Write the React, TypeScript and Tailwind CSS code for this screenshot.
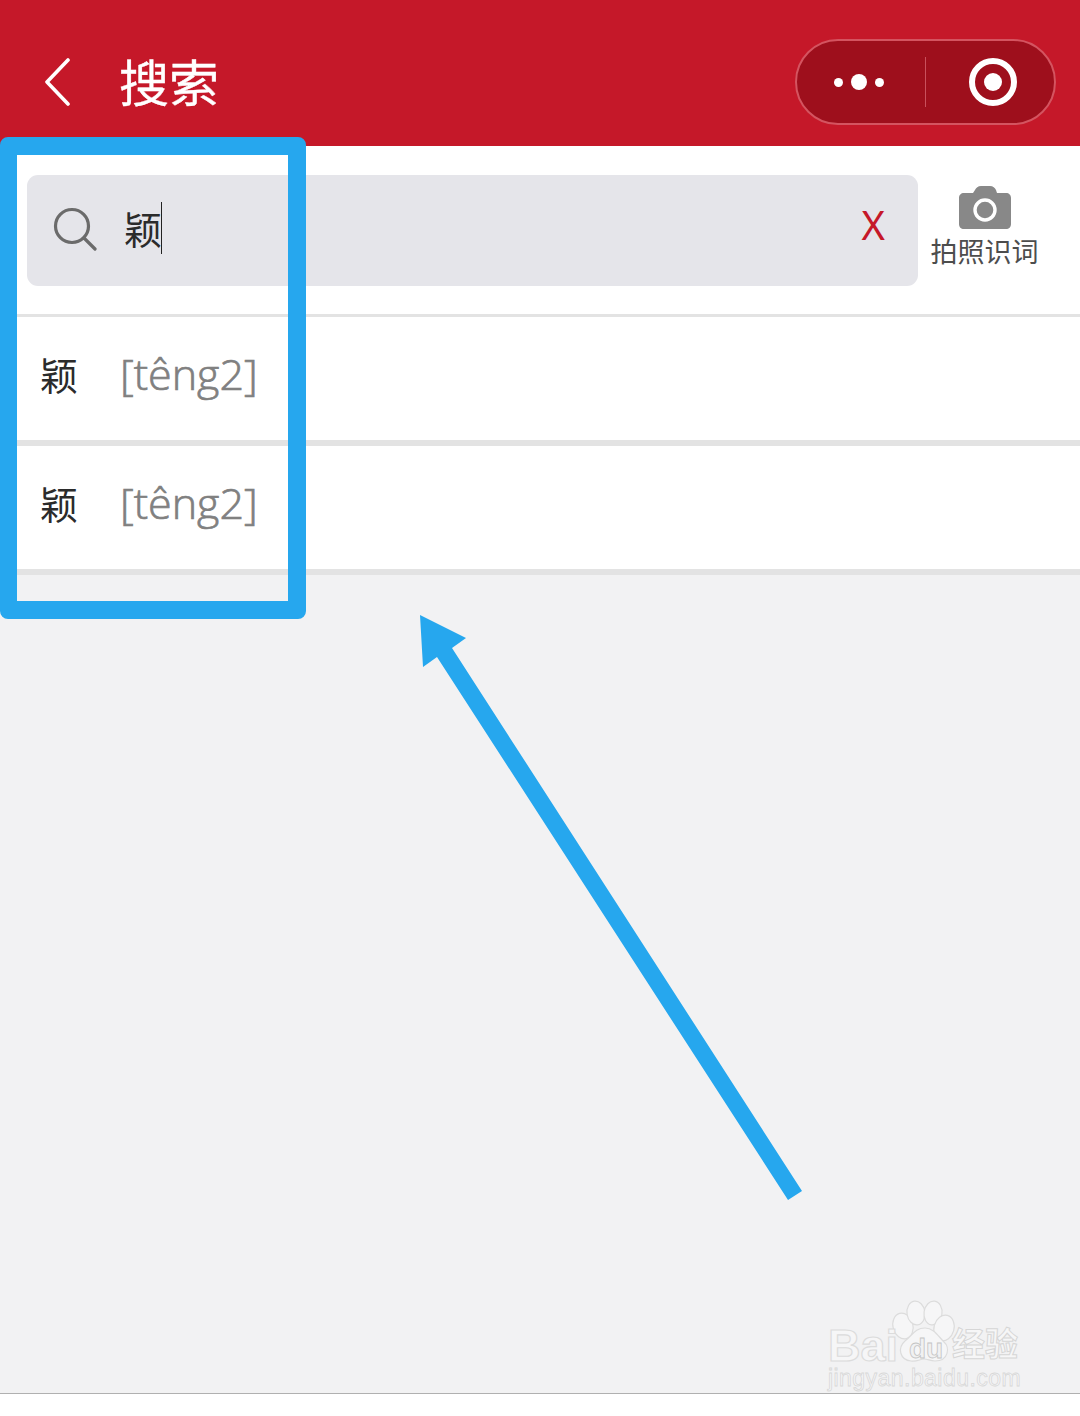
import React from "react";

const CJK = "font-['Noto_Sans_CJK_SC','Noto_Sans',sans-serif]";

function Row() {
  return (
    <div className="flex h-[123px] items-start bg-white pt-[38px] pl-[40px]">
      <span className={`w-[80px] text-[38px] leading-none text-[#2b2b2b] ${CJK}`}>颖</span>
      <span className="-mt-[3px] font-['Open_Sans','Noto_Sans',sans-serif] text-[43px] leading-none font-light text-[#808080] [-webkit-text-stroke:0.7px_#808080]">[têng2]</span>
    </div>
  );
}

function Watermark() {
  return (
    <div className="pointer-events-none absolute top-[1298px] left-[825px] h-[95px] w-[200px]">
      <svg className="absolute top-0 left-0" width="200" height="70" viewBox="825 1298 200 70">
        <g fill="#f6f6f7" stroke="#dcdcdc" strokeWidth="1.2">
          <ellipse cx="903" cy="1326" rx="10" ry="13" transform="rotate(-15 903 1326)" />
          <ellipse cx="916" cy="1313" rx="9" ry="12" transform="rotate(-8 916 1313)" />
          <ellipse cx="933" cy="1313" rx="9" ry="12" transform="rotate(8 933 1313)" />
          <ellipse cx="944" cy="1328" rx="10" ry="13" transform="rotate(15 944 1328)" />
          <path d="M925 1328c9 0 13 8 19 14 6 5 5 19-9 19-5 0-7-2-11-2s-7 3-13 2c-11-1-14-13-6-20 7-5 10-13 20-13z" />
        </g>
      </svg>
      <span className="absolute top-[25px] left-[3px] font-['Liberation_Sans',sans-serif] text-[45px] leading-none font-bold text-[#f6f6f7] [-webkit-text-stroke:1.2px_#dcdcdc]">Bai</span>
      <span className="absolute top-[37px] left-[84px] font-['Liberation_Sans',sans-serif] text-[28px] leading-none font-bold text-[#f1f1f2] [-webkit-text-stroke:0.8px_#c4c4c4]">du</span>
      <span className={`absolute top-[28px] left-[127px] text-[33px] leading-none font-bold text-[#f6f6f7] [-webkit-text-stroke:1px_#d6d6d6] ${CJK}`}>经验</span>
      <span className="absolute top-[69px] left-[3px] font-['Liberation_Sans',sans-serif] text-[23px] leading-none tracking-[0.45px] text-[#f6f6f7] [-webkit-text-stroke:0.8px_#d8d8d8]">jingyan.baidu.com</span>
    </div>
  );
}

export default function App() {
  return (
    <div className={`relative flex h-[1416px] w-[1080px] flex-col overflow-hidden bg-white ${CJK}`}>
      <header className="flex h-[146px] shrink-0 items-center bg-[#c51829] pt-[18px] pl-[44px]">
        <svg width="28" height="48" viewBox="0 0 28 48" fill="none" stroke="#fff" strokeWidth="3.6" strokeLinecap="round" strokeLinejoin="round">
          <path d="M24 2 3 24l21 22" />
        </svg>
        <h1 className="-mt-[4px] ml-[47px] text-[50px] leading-none font-normal text-white [-webkit-text-stroke:0.4px_#fff]">搜索</h1>
        <div className="mr-[24px] ml-auto flex h-[86px] w-[261px] items-center rounded-full border-2 border-[#d45460] bg-[#9e0f1c]">
          <div className="flex w-[128px] items-center justify-center gap-[8px] pr-[4px]">
            <span className="h-[9px] w-[9px] rounded-full bg-white" />
            <span className="h-[16px] w-[16px] rounded-full bg-white" />
            <span className="h-[9px] w-[9px] rounded-full bg-white" />
          </div>
          <div className="h-[50px] w-px bg-[#c9505c]" />
          <div className="flex flex-1 items-center justify-center pl-[6px]">
            <span className="flex h-[48px] w-[48px] items-center justify-center rounded-full border-[6px] border-white">
              <span className="h-[18px] w-[18px] rounded-full bg-white" />
            </span>
          </div>
        </div>
      </header>

      <div className="flex h-[168px] shrink-0 bg-white pt-[29px] pl-[27px]">
        <div className="flex h-[111px] w-[891px] items-center rounded-[11px] bg-[#e5e5ea] pr-[32px] pl-[26px]">
          <svg className="-mt-[4px]" width="44" height="44" viewBox="0 0 44 44" fill="none" stroke="#6b6b6b" strokeWidth="3.2" strokeLinecap="round">
            <circle cx="19" cy="19" r="16.5" />
            <path d="M31 31l11 11" />
          </svg>
          <span className="-mt-[6px] ml-[27px] text-[38px] leading-none text-[#2b2b2b]">颖</span>
          <span className="-mt-[5px] -ml-[1px] h-[52px] w-px bg-[#222]" />
          <span className="-mt-[12px] mr-[1px] ml-auto font-['Noto_Sans',sans-serif] text-[40px] leading-none font-normal text-[#c51829]">X</span>
        </div>
        <div className="ml-[13px] flex w-[107px] flex-col items-center pt-[11px]">
          <svg width="52" height="43" viewBox="0 0 52 43">
            <path fill="#888" d="M5 7h9l2-3c1-2 3-4 6-4h9c3 0 5 2 6 4l1 3h9c3 0 5 2 5 5v26c0 3-2 5-5 5H5c-3 0-5-2-5-5V12c0-3 2-5 5-5z" />
            <circle cx="26" cy="24" r="10" fill="#888" stroke="#fff" strokeWidth="3.4" />
          </svg>
          <span className="mt-[6px] text-[27px] leading-[32px] whitespace-nowrap text-[#4d4d4d]">拍照识词</span>
        </div>
      </div>

      <div className="h-[3px] shrink-0 bg-[#e3e3e3]" />
      <Row />
      <div className="h-[6px] shrink-0 bg-[#e3e3e3]" />
      <Row />
      <div className="h-[6px] shrink-0 bg-[#e3e3e3]" />
      <div className="flex-1 bg-[#f2f2f3]" />
      <div className="h-[1px] shrink-0 bg-[#b0b0b0]" />
      <div className="h-[22px] shrink-0 bg-white" />

      <div className="pointer-events-none absolute top-[137px] left-0 h-[482px] w-[306px] rounded-[8px] border-[18px] border-l-[17px] border-[#26a7ee]" />
      <svg className="pointer-events-none absolute top-0 left-0" width="1080" height="1416" viewBox="0 0 1080 1416">
        <polygon fill="#26a7ee" points="420,615 466,638 452,648 802,1191 788,1200 437,657 423,667" />
      </svg>
      <Watermark />
    </div>
  );
}
